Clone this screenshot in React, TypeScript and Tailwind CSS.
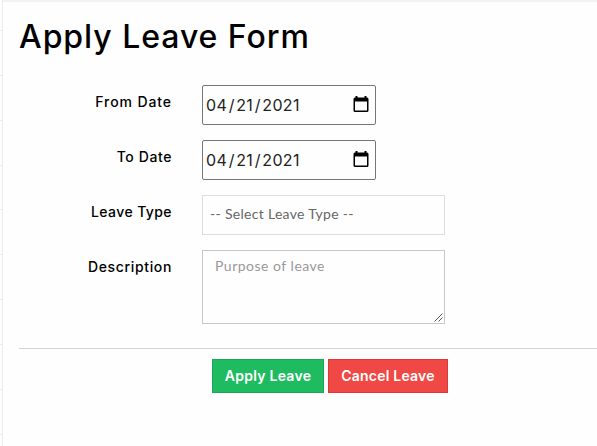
import type { ReactNode } from "react";

const gridRows = [30, 75, 120, 165, 209, 254, 299, 344, 389, 434];

function CalendarIcon() {
  return (
    <svg width="16" height="18" viewBox="0 0 16 18" className="shrink-0 -translate-y-px">
      <path
        fill="#000"
        fillRule="evenodd"
        d="M2.500 1h2v1.500h7V1h2v1.500H14A1.500 1.500 0 0 1 15.500 4v11.500A1.500 1.500 0 0 1 14 17H2A1.500 1.500 0 0 1 .5 15.500V4A1.500 1.500 0 0 1 2 2.500h.5V1ZM2 6.500v9h12v-9H2Z"
      />
    </svg>
  );
}

function Field({ label, children }: { label: ReactNode; children: ReactNode }) {
  return (
    <div className="flex items-start">
      <div className="w-[152px] mr-[30px] pt-[7px] text-right text-[14px] leading-5 text-black font-medium whitespace-nowrap">
        {label}
      </div>
      {children}
    </div>
  );
}

function DateBox({ value }: { value: string }) {
  const parts = value.split("/");
  return (
    <div className="flex items-center justify-between w-[174px] h-10 pl-[3px] pr-[6px] pb-px border border-[#767676] rounded-[2px] text-[16px] text-[#222]">
      <span className="tracking-[0.4px]">
        {parts.map((part, i) => (
          <span key={i}>
            {i > 0 && <span className="px-[1.4px]">/</span>}
            {part}
          </span>
        ))}
      </span>
      <CalendarIcon />
    </div>
  );
}

export default function App() {
  return (
    <div className="flex w-[597px] h-[446px] overflow-hidden bg-[#fefefe] font-['Inter',sans-serif]">
      {/* edge of the table behind the panel */}
      <div className="relative w-[3px] shrink-0 border-r border-[#ececef]">
        {gridRows.map((y) => (
          <div key={y} className="absolute left-0 w-[2px] h-px bg-[#ececef]" style={{ top: y }} />
        ))}
      </div>

      <div className="flex-1 border-t-2 border-[#f2f2f3] pl-4">
        <h1 className="mt-[14px] h-10 text-[32px] leading-[41px] font-medium text-black whitespace-nowrap">
          <span className="tracking-[0.95px]">Apply Leave Form</span>
        </h1>

        <div className="mt-[29px] ml-px flex flex-col gap-[15px]">
          <Field label={<span className="tracking-[0.9px]">From Date</span>}>
            <DateBox value="04/21/2021" />
          </Field>
          <Field label={<span className="tracking-[0.6px]">To Date</span>}>
            <DateBox value="04/21/2021" />
          </Field>
          <Field label={<span className="tracking-[0.4px]">Leave Type</span>}>
            <div className="w-[243px] h-10 pl-[7px] border border-[#ddd] text-[14px] leading-[36px] text-[#666] font-['Lato',sans-serif]">
              <span className="tracking-[0.3px]">-- Select Leave Type --</span>
            </div>
          </Field>
          <Field label={<span className="tracking-[0.65px]">Description</span>}>
            <div className="relative w-[243px] h-[74px] pl-3 pt-[5px] border border-[#c8c8c8] text-[14px] leading-5 text-[#999] font-['Lato',sans-serif]">
              <span className="tracking-[0.5px]">Purpose of leave</span>
              <svg width="9" height="9" viewBox="0 0 9 9" className="absolute right-px bottom-px">
                <path d="M.5 8.500l8-8M4.500 8.500l4-4" stroke="#555" strokeWidth="1" fill="none" />
              </svg>
            </div>
          </Field>
        </div>

        <div className="mt-6 border-t border-[#d3d3d3]" />

        <div className="mt-[10px] ml-[193px] flex gap-1 text-[14px] leading-8 font-semibold text-white text-center whitespace-nowrap">
          <button className="w-28 h-[34px] bg-[#1fbb60] border border-[#1ba554]">
            <span className="tracking-[0.25px]">Apply Leave</span>
          </button>
          <button className="w-[120px] h-[34px] bg-[#f04844] border border-[#d83c39]">
            <span className="tracking-[0.2px]">Cancel Leave</span>
          </button>
        </div>
      </div>
    </div>
  );
}
